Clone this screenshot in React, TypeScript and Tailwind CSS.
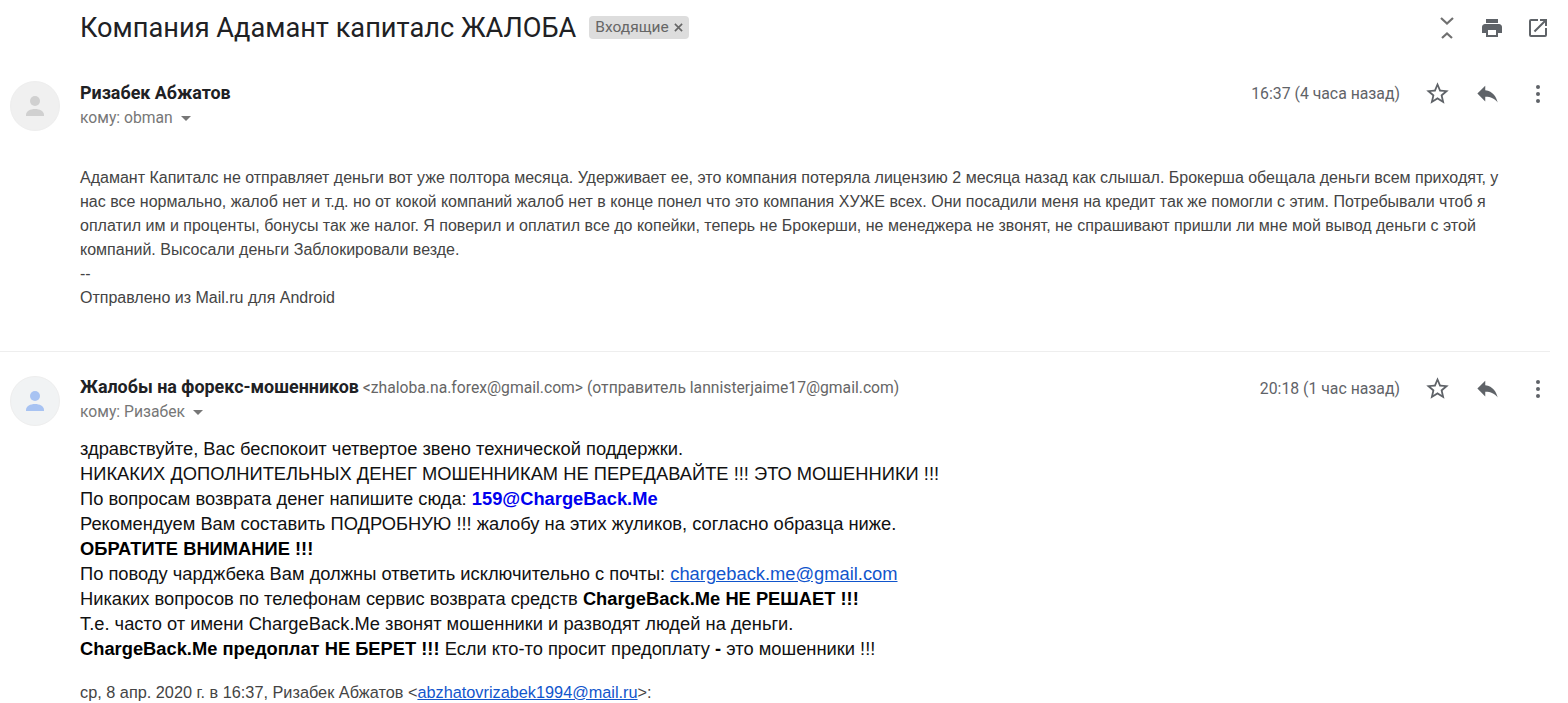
import React from "react";

const Avatar = ({ color, blue }: { color: string; blue?: boolean }) => (
  <div className={`w-[50px] h-[50px] rounded-full shrink-0 flex items-center justify-center border border-[#eeeeee] ${blue ? "bg-[#f1f3f4]" : "bg-[#f0f0f0]"}`}>
    <svg width="22" height="24" viewBox="0 0 22 24" fill={color}>
      <circle cx="11" cy="7" r="5" />
      <path d="M2 21c0-4 4.5-6 9-6s9 2 9 6v1H2z" />
    </svg>
  </div>
);

const Actions = ({ time }: { time: string }) => (
  <div className="flex items-center shrink-0">
    <span className="text-[15.8px] text-[#5f6368] font-['Roboto',sans-serif] mr-[24px]">{time}</span>
    <svg className="mr-[23px]" width="27" height="27" viewBox="0 0 24 24" fill="#5f6368">
      <path d="M22 9.24l-7.19-.62L12 2 9.19 8.63 2 9.24l5.46 4.73L5.82 21 12 17.27 18.18 21l-1.63-7.03L22 9.24zM12 15.4l-3.76 2.27 1-4.28-3.32-2.88 4.38-.38L12 6.1l1.71 4.04 4.38.38-3.32 2.88 1 4.28L12 15.4z" />
    </svg>
    <svg className="mr-[25px]" width="27" height="27" viewBox="0 0 24 24" fill="#5f6368">
      <path d="M10 9V5l-7 7 7 7v-4.1c5 0 8.5 1.6 11 5.1-1-5-4-10-11-11z" />
    </svg>
    <svg width="24" height="24" viewBox="0 0 24 24" fill="#5f6368">
      <circle cx="12" cy="5" r="2" />
      <circle cx="12" cy="12" r="2" />
      <circle cx="12" cy="19" r="2" />
    </svg>
  </div>
);

const Caret = () => <span className="inline-block ml-[8px] align-middle w-0 h-0 border-l-[5px] border-r-[5px] border-t-[5px] border-l-transparent border-r-transparent border-t-[#777777]" />;

export default function App() {
  return (
    <div className="w-[1568px] h-[703px] overflow-hidden bg-white font-['Roboto',sans-serif]">
      <div className="flex items-center h-[56px] pl-[80px] pr-[18px]">
        <h1 className="text-[27.2px] leading-[36px] text-[#202124] font-normal">Компания Адамант капиталс ЖАЛОБА</h1>
        <span className="ml-[13px] h-[23px] -mt-[1px] px-[6px] flex items-center gap-[5px] bg-[#dddddd] rounded-[4px] text-[15.5px] text-[#666666]">
          Входящие
          <svg width="9" height="9" viewBox="0 0 10 10" stroke="#666666" strokeWidth="1.8"><path d="M1 1l8 8M9 1l-8 8" /></svg>
        </span>
        <div className="ml-auto flex items-center gap-[22px]">
          <svg className="ml-[1px] -mr-[1px]" width="24" height="24" viewBox="0 0 24 24" fill="none" stroke="#707070" strokeWidth="2.2"><path d="M6 2l6 5.5L18 2M7 22l5-4.5 5 4.5" /></svg>
          <svg width="24" height="24" viewBox="0 0 24 24" fill="#5f6368"><path d="M19 8H5c-1.66 0-3 1.34-3 3v6h4v4h12v-4h4v-6c0-1.66-1.34-3-3-3zm-3 11H8v-5h8v5zM18 3H6v4h12V3z" /></svg>
          <svg width="24" height="24" viewBox="0 0 24 24" fill="#5f6368"><path d="M19 19H5V5h7V3H5a2 2 0 0 0-2 2v14a2 2 0 0 0 2 2h14a2 2 0 0 0 2-2v-7h-2v7zM14 3v2h3.59l-9.83 9.83 1.41 1.41L19 6.41V10h2V3h-7z" /></svg>
        </div>
      </div>

      <div className="h-[296px] border-b border-[#eeeeee] mr-[18px]">
        <div className="flex pl-[10px] pt-[25px]">
          <Avatar color="#d0d0d0" />
          <div className="ml-[20px] flex-1">
            <div className="text-[17.9px] leading-[24px] font-bold text-[#202124]">Ризабек Абжатов</div>
            <div className="text-[15.7px] leading-[24px] mt-[1px] text-[#777777]">кому: obman<Caret /></div>
          </div>
          <div className="h-[24px] -mt-[1px]"><Actions time="16:37 (4 часа назад)" /></div>
        </div>
        <div className="ml-[80px] mt-[35px] w-[1430px] font-['Liberation_Sans',Arial,sans-serif] text-[16px] leading-[24px] text-[#444444]">
          <p>Адамант Капиталс не отправляет деньги вот уже полтора месяца. Удерживает ее, это компания потеряла лицензию 2 месяца назад как слышал. Брокерша обещала деньги всем приходят, у нас все нормально, жалоб нет и т.д. но от кокой компаний жалоб нет в конце понел что это компания ХУЖЕ всех. Они посадили меня на кредит так же помогли с этим. Потребывали чтоб я оплатил им и проценты, бонусы так же налог. Я поверил и оплатил все до копейки, теперь не Брокерши, не менеджера не звонят, не спрашивают пришли ли мне мой вывод деньги с этой компаний. Высосали деньги Заблокировали везде.</p>
          <p>--</p>
          <p>Отправлено из Mail.ru для Android</p>
        </div>
      </div>

      <div className="flex pl-[10px] mr-[18px] pt-[24px]">
        <Avatar color="#a8c3f2" blue />
        <div className="ml-[20px] flex-1">
          <div className="leading-[24px] -mt-[1px] whitespace-nowrap">
            <span className="text-[17.9px] font-bold text-[#202124]">Жалобы на форекс-мошенников</span>
            <span className="text-[15.7px] text-[#666666]"> &lt;zhaloba.na.forex@gmail.com&gt; (отправитель lannisterjaime17@gmail.com)</span>
          </div>
          <div className="text-[15.7px] leading-[24px] text-[#777777]">кому: Ризабек<Caret /></div>
        </div>
        <div className="h-[24px] -mt-[1px]"><Actions time="20:18 (1 час назад)" /></div>
      </div>
      <div className="ml-[80px] mt-[10px] font-['Liberation_Sans',Arial,sans-serif] text-[18.32px] leading-[25px] text-[#111111]">
        <p>здравствуйте, Вас беспокоит четвертое звено технической поддержки.</p>
        <p>НИКАКИХ ДОПОЛНИТЕЛЬНЫХ ДЕНЕГ МОШЕННИКАМ НЕ ПЕРЕДАВАЙТЕ !!! ЭТО МОШЕННИКИ !!!</p>
        <p>По вопросам возврата денег напишите сюда: <b className="text-[#0000ee]">159@ChargeBack.Me</b></p>
        <p>Рекомендуем Вам составить ПОДРОБНУЮ !!! жалобу на этих жуликов, согласно образца ниже.</p>
        <p><b className="text-black">ОБРАТИТЕ ВНИМАНИЕ !!!</b></p>
        <p>По поводу чарджбека Вам должны ответить исключительно с почты: <a className="text-[#1155cc] underline">chargeback.me@gmail.com</a></p>
        <p>Никаких вопросов по телефонам сервис возврата средств <b className="text-black">ChargeBack.Me НЕ РЕШАЕТ !!!</b></p>
        <p>Т.е. часто от имени ChargeBack.Me звонят мошенники и разводят людей на деньги.</p>
        <p><b className="text-black">ChargeBack.Me предоплат НЕ БЕРЕТ !!!</b> Если кто-то просит предоплату <b className="text-black">-</b> это мошенники !!!</p>
      </div>
      <div className="ml-[80px] mt-[19px] font-['Liberation_Sans',Arial,sans-serif] text-[16.3px] leading-[24px] text-[#444444]">
        ср, 8 апр. 2020 г. в 16:37, Ризабек Абжатов &lt;<a className="text-[#1155cc] underline">abzhatovrizabek1994@mail.ru</a>&gt;:
      </div>
    </div>
  );
}
